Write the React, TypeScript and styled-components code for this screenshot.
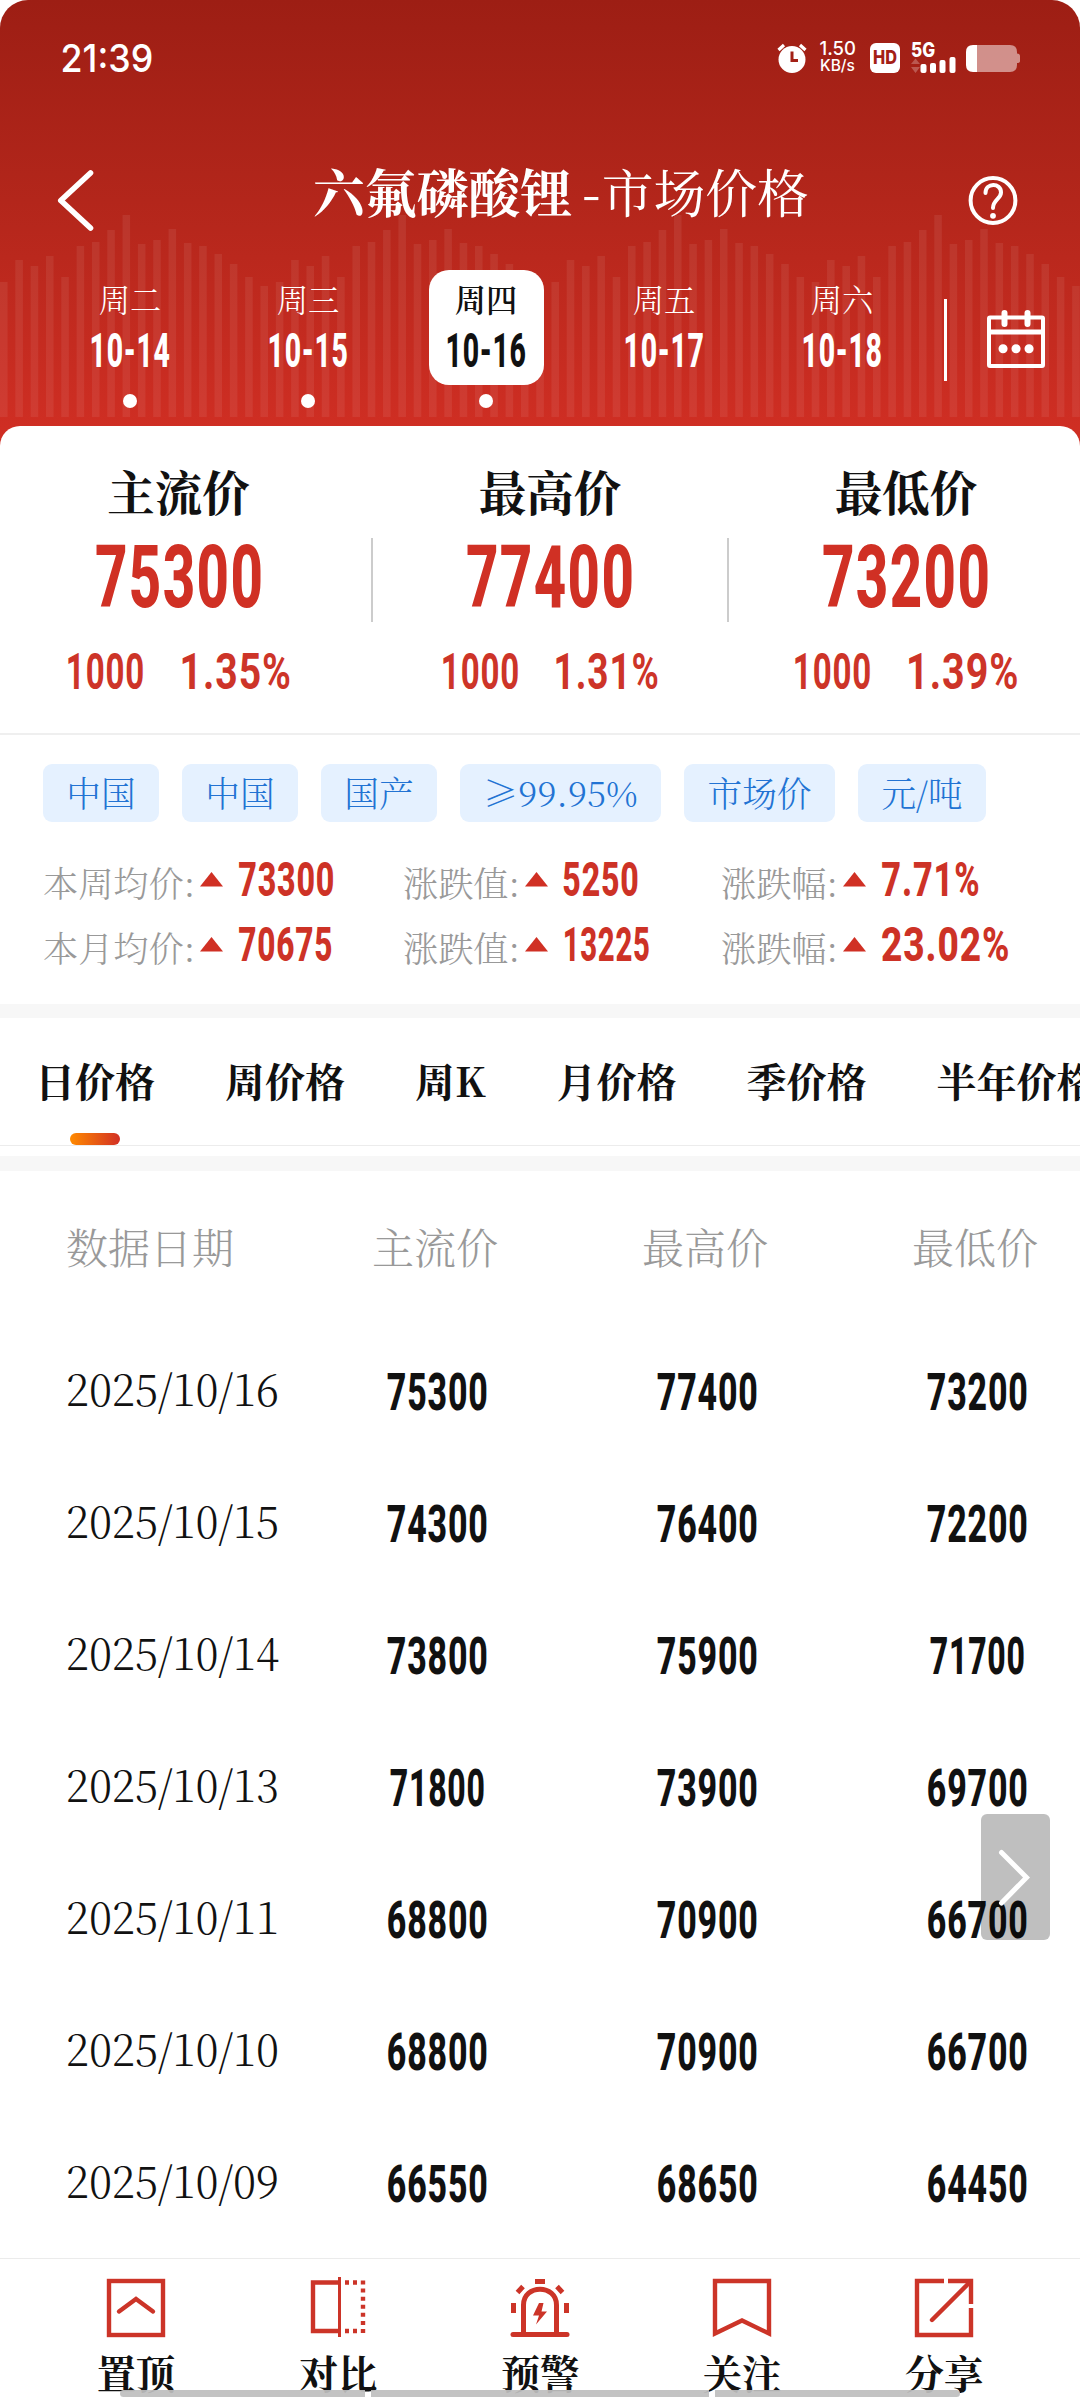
import React, { useLayoutEffect, useRef, useState } from 'react';
import styled, { createGlobalStyle, css } from 'styled-components';

const RED = '#d03024';
const INK = '#111';
const SERIF = `"Noto Serif CJK SC", "Noto Serif SC", "Noto Sans CJK SC", serif`;
const DATE = `"Noto Serif CJK SC", "Liberation Serif", serif`;
const DIGITS = `Roboto, "Liberation Sans", sans-serif`;

const Global = createGlobalStyle`
  * { box-sizing: border-box; }
  body { margin: 0; background: #fff; }
`;

/* ---------- text squeezed horizontally to a known width ---------- */
const FitBox = styled.span<{ $w: number }>`
  display: inline-flex;
  justify-content: center;
  flex: none;
  width: ${(p) => p.$w}px;
`;
const FitInner = styled.span<{ $track: number }>`
  flex: none;
  white-space: nowrap;
  letter-spacing: ${(p) => p.$track}em;
  padding-left: ${(p) => p.$track}em;
`;
function Fit({ w, track = 0, children }: { w: number; track?: number; children: React.ReactNode }) {
  const ref = useRef<HTMLSpanElement>(null);
  const [k, setK] = useState(1);
  useLayoutEffect(() => {
    if (ref.current) setK(w / ref.current.offsetWidth);
  }, [w]);
  return (
    <FitBox $w={w}>
      <FitInner ref={ref} $track={track} style={{ transform: `scaleX(${k})` }}>{children}</FitInner>
    </FitBox>
  );
}
const Num = ({ w, children }: { w: number; children: React.ReactNode }) => (
  <Fit w={w + 2} track={0.025}>{children}</Fit>
);

/* ---------- page ---------- */
const Page = styled.div`
  width: 1080px;
  height: 2400px;
  display: flex;
  flex-direction: column;
  overflow: hidden;
  position: relative;
  background: #fff;
  color: ${INK};
  font-family: ${SERIF};
`;
const Header = styled.header`
  position: relative;
  flex: none;
  height: 446px;
  color: #fff;
  border-radius: 28px 28px 0 0;
  overflow: hidden;
  background: linear-gradient(#9d1e14, #b3261b 45%, #cf2e23 96%);
`;
const Wave = styled.svg`
  position: absolute;
  left: 0;
  top: 0;
`;
const Status = styled.div`
  position: relative;
  display: flex;
  align-items: center;
  height: 115px;
  padding: 0 60px 0 60px;
  font-family: Inter, sans-serif;
`;
const Clock = styled.div`
  font-size: 38.5px;
  font-weight: 500;
  line-height: 46px;
  flex: 1;
`;
const Speed = styled.div`
  display: flex;
  flex-direction: column;
  width: 36px;
  margin: 0 14px 0 13px;
  font-weight: 500;
`;
const SpeedLine = styled.span<{ $s: number; $h: number }>`
  display: block;
  font-size: ${(p) => p.$s}px;
  line-height: ${(p) => p.$h}px;
`;
const HdBadge = styled.div`
  width: 30px;
  height: 30px;
  border-radius: 6px;
  background: #fff;
  color: #a32016;
  font: 800 19px/30px Inter, sans-serif;
  text-align: center;
`;
const Signal = styled.div`
  width: 46px;
  height: 30px;
  margin: 0 9px 0 11px;
  display: flex;
  flex-direction: column;
`;
const SignalText = styled.span`
  font: 800 20px/15px Inter, sans-serif;
  height: 14px;
`;
const SignalSvg = styled.svg`
  display: block;
  flex: none;
`;

const Nav = styled.div`
  position: relative;
  height: 155px;
  display: flex;
  align-items: center;
  padding: 0 61px 0 56px;
`;
const NavIcon = styled.svg`
  flex: none;
  margin-top: 16px;
`;
const Title = styled.h1`
  margin: 0 0 3px 59px;
  flex: 1;
  text-align: center;
  font-size: 51.8px;
  line-height: 60px;
  font-weight: 700;
  white-space: nowrap;
`;
const TitleSub = styled.span`
  font-weight: 400;
  margin-left: 10px;
`;
const TitleDash = styled.span`
  font-weight: 600;
  margin-right: 1px;
`;

const DayStrip = styled.div`
  position: relative;
  display: flex;
  padding-left: 41px;
`;
const Day = styled.div`
  width: 178px;
  display: flex;
  flex-direction: column;
  align-items: center;
`;
const DayCard = styled.div<{ $on?: boolean }>`
  width: 115px;
  height: 115px;
  border-radius: 20px;
  padding-top: 11px;
  display: flex;
  flex-direction: column;
  align-items: center;
  ${(p) => p.$on && css`background: #fff; color: ${INK};`}
`;
const DayName = styled.span<{ $on?: boolean }>`
  font-size: 31.3px;
  line-height: 36px;
  font-weight: ${(p) => (p.$on ? 600 : 300)};
`;
const DayDate = styled.span`
  margin-top: 9px;
  font: 800 48.5px/50px ${DIGITS};
`;
const Dot = styled.span`
  width: 14px;
  height: 14px;
  margin-top: 9px;
  border-radius: 50%;
  background: #fff;
`;
const StripRule = styled.span`
  width: 3px;
  height: 82px;
  margin: 29px 40px 0 13px;
  background: #fff;
`;
const Calendar = styled.svg`
  margin-top: 40px;
`;

/* ---------- summary ---------- */
const Sheet = styled.main`
  position: relative;
  flex: 1;
  min-height: 0;
  overflow: hidden;
  margin-top: -20px;
  border-radius: 20px 20px 0 0;
  background: #fff;
`;
const Summary = styled.section`
  display: flex;
  height: 309px;
  border-bottom: 2px solid #efefef;
`;
const Price = styled.div<{ $w: number }>`
  flex: none;
  width: ${(p) => p.$w}px;
  display: flex;
  flex-direction: column;
  align-items: center;
  padding-top: 35px;
`;
const PriceName = styled.span`
  font-size: 47.5px;
  line-height: 60px;
  height: 60px;
  font-weight: 700;
`;
const PriceValue = styled.span`
  margin-top: 11px;
  color: ${RED};
  font: 800 87px/90px ${DIGITS};
`;
const PriceDelta = styled.span`
  display: flex;
  gap: 33px;
  margin-top: 25px;
  color: #cd3428;
  font: 700 50.5px/50px ${DIGITS};
`;
const Rule = styled.span<{ $ml?: number }>`
  flex: none;
  width: 2px;
  height: 84px;
  margin: 112px 0 0 ${(p) => p.$ml ?? 0}px;
  background: #ccc;
`;

const Tags = styled.div`
  display: flex;
  gap: 23px;
  padding: 29px 0 0 43px;
`;
const Tag = styled.span<{ $w: number }>`
  width: ${(p) => p.$w}px;
  height: 58px;
  border-radius: 9px;
  background: #e5f1ff;
  color: #2273d3;
  font-size: 34.7px;
  line-height: 56px;
  font-weight: 300;
  text-align: center;
  white-space: nowrap;
`;
const Stats = styled.div`
  display: grid;
  grid-template-columns: 360px 318px 1fr;
  grid-auto-rows: 65px;
  padding: 25px 0 27px 43px;
`;
const Stat = styled.div`
  display: flex;
  align-items: center;
  color: #999;
  font-size: 35.2px;
  font-weight: 300;
`;
const StatLabel = styled.span<{ $w: number }>`
  width: ${(p) => p.$w}px;
  padding-top: 4px;
  white-space: nowrap;
`;
const Up = styled.svg`
  margin-right: 14px;
`;
const StatValue = styled.span`
  color: #cd3226;
  font: 800 49px/60px ${DIGITS};
  padding-top: 1px;
`;

const Band = styled.div<{ $h: number }>`
  height: ${(p) => p.$h}px;
  background: #f7f7f7;
`;
const Tabs = styled.nav`
  display: flex;
  gap: 70px;
  height: 128px;
  padding-left: 35px;
  border-bottom: 1px solid #ececec;
  margin-bottom: 10px;
`;
const Tab = styled.span<{ $w: number }>`
  flex: none;
  width: ${(p) => p.$w}px;
  padding-top: 33px;
  font-size: 40px;
  line-height: 58px;
  font-weight: 700;
  white-space: nowrap;
`;
const TabMark = styled.span`
  display: block;
  width: 50px;
  height: 12px;
  margin: 24px auto 0;
  border-radius: 6px;
  background: linear-gradient(90deg, #ff8a00, #d23024);
`;

/* ---------- table ---------- */
const Row = styled.div`
  display: grid;
  grid-template-columns: 302px 270px 270px 270px;
  align-items: center;
  height: 132px;
`;
const HeadRow = styled(Row)`
  height: 154px;
  color: #999;
  font-size: 42px;
  font-weight: 300;
  line-height: 60px;
  padding-bottom: 4px;
`;
const DateCell = styled.div`
  padding-left: 66px;
`;
const DayText = styled(DateCell)`
  font: 300 44.5px/60px ${DATE};
  padding-bottom: 9px;
`;
const HeadCell = styled.div`
  text-align: center;
  padding-right: 4px;
`;
const NumCell = styled.div`
  text-align: center;
  font: 800 51px/60px ${DIGITS};
  padding-top: 3px;
`;
const SideButton = styled.button`
  position: absolute;
  left: 981px;
  top: 1814px;
  width: 69px;
  height: 126px;
  border: 0;
  padding: 0;
  border-radius: 6px;
  background: rgba(0, 0, 0, 0.25);
`;

/* ---------- footer ---------- */
const Footer = styled.footer`
  flex: none;
  position: relative;
  height: 142px;
  display: flex;
  padding: 0 35px;
  border-top: 1px solid #ebebeb;
  background: #fff;
`;
const Action = styled.div`
  width: 202px;
  display: flex;
  flex-direction: column;
  align-items: center;
  padding-top: 18px;
  font-size: 39.3px;
  line-height: 50px;
  font-weight: 700;
`;
const ActionIcon = styled.svg`
  flex: none;
  fill: none;
  stroke: #cc3428;
  stroke-width: 4.4;
  margin-bottom: 8px;
`;
const HomeBar = styled.div`
  position: absolute;
  left: 120px;
  bottom: 3px;
  width: 840px;
  height: 7px;
  display: flex;
  gap: 6px;
  border-radius: 4px;
  overflow: hidden;
`;
const HomePart = styled.span<{ $w: number }>`
  width: ${(p) => p.$w}px;
  background: rgba(190, 190, 190, 0.93);
`;

const waveTops = [282, 260, 266, 256, 277, 246, 242, 230, 215, 244, 240, 229, 243, 246, 254, 264, 277, 286];
const waves = [
  { x: 0, n: 18 },
  { x: 275.8, n: 18 },
  { x: 551.4, n: 17 },
  { x: 811.7, n: 18 },
];

const days = [
  { name: '周二', date: '10-14', dot: true },
  { name: '周三', date: '10-15', dot: true },
  { name: '周四', date: '10-16', dot: true, on: true },
  { name: '周五', date: '10-17' },
  { name: '周六', date: '10-18' },
];
const tags: [string, number][] = [['中国', 116], ['中国', 116], ['国产', 116], ['≥99.95%', 201], ['市场价', 151], ['元/吨', 128]];
const stats: [string, string, number][] = [
  ['本周均价:', '73300', 96],
  ['涨跌值:', '5250', 76],
  ['涨跌幅:', '7.71%', 98],
  ['本月均价:', '70675', 94],
  ['涨跌值:', '13225', 87],
  ['涨跌幅:', '23.02%', 128],
];
const tabs: [string, number][] = [['日价格', 120], ['周价格', 120], ['周K', 71.5], ['月价格', 120], ['季价格', 120], ['半年价格', 160]];
const rows = [
  ['2025/10/16', '75300', '77400', '73200'],
  ['2025/10/15', '74300', '76400', '72200'],
  ['2025/10/14', '73800', '75900', '71700'],
  ['2025/10/13', '71800', '73900', '69700'],
  ['2025/10/11', '68800', '70900', '66700'],
  ['2025/10/10', '68800', '70900', '66700'],
  ['2025/10/09', '66550', '68650', '64450'],
];
const numWidth = (s: string) => (s.includes('1') ? 95 : 101);

function PriceColumn({ name, value, delta, pct, w, pw }: { name: string; value: string; delta: string; pct: string; w: number; pw: number }) {
  return (
    <Price $w={w}>
      <PriceName>{name}</PriceName>
      <PriceValue><Num w={169}>{value}</Num></PriceValue>
      <PriceDelta><Num w={78}>{delta}</Num><Num w={pw}>{pct}</Num></PriceDelta>
    </Price>
  );
}

export default function App() {
  return (
    <Page>
      <Global />
      <Header>
        <Wave width="1080" height="446" fill="#fff" fillOpacity="0.07">
          {waves.map((w) =>
            waveTops.slice(0, w.n).map((t, i) => (
              <rect key={`${w.x}-${i}`} x={w.x + i * 15.32} y={t} width="7.6" height={417 - t} />
            )),
          )}
        </Wave>
        <Status>
          <Clock><Fit w={93}>21:39</Fit></Clock>
          <svg width="30" height="30" viewBox="0 0 30 30">
            <circle cx="15" cy="16.5" r="13.5" fill="#fff" />
            <path d="M1.5 7 L7 2 M23 2 L28.5 7" stroke="#fff" strokeWidth="3.2" />
            <path d="M15 8.5 V17.6 H21" stroke="#a32016" strokeWidth="3" fill="none" />
          </svg>
          <Speed>
            <SpeedLine $s={19} $h={16}><Fit w={36}>1.50</Fit></SpeedLine>
            <SpeedLine $s={15.5} $h={17}><Fit w={35}>KB/s</Fit></SpeedLine>
          </Speed>
          <HdBadge><Fit w={24}>HD</Fit></HdBadge>
          <Signal>
            <SignalText><Fit w={24}>5G</Fit></SignalText>
            <SignalSvg width="46" height="16" fill="#fff">
              <path d="M0 7 L4.5 1.5 L9 7 Z M0 10 H9 L4.5 16 Z" fillOpacity="0.25" />
              <rect x="9.5" y="7" width="6" height="9" rx="2" />
              <rect x="19" y="6" width="6" height="10" rx="2" />
              <rect x="28.5" y="3" width="6" height="13" rx="2" />
              <rect x="38.5" y="0" width="6" height="16" rx="2" />
            </SignalSvg>
          </Signal>
          <svg width="54" height="28" viewBox="0 0 54 28">
            <path d="M11 1 H44 Q51 1 51 8 V9.5 Q54 9.5 54 12 V17 Q54 19 51 19 V21 Q51 28 44 28 H11 Z" fill="#fff" fillOpacity="0.5" />
            <path d="M11 1 V28 H7 Q0 28 0 21 V8 Q0 1 7 1 Z" fill="#fff" />
          </svg>
        </Status>
        <Nav>
          <NavIcon width="40" height="64" fill="none" stroke="#fff" strokeWidth="5.6" strokeLinecap="round" strokeLinejoin="round">
            <path d="M34.5 4 L4.8 31.5 L34.5 59" />
          </NavIcon>
          <Title>六氟磷酸锂<TitleSub><TitleDash>-</TitleDash>市场价格</TitleSub></Title>
          <NavIcon width="52" height="52" fill="none" stroke="#fff" strokeWidth="4" strokeLinecap="round">
            <circle cx="26" cy="25.5" r="22.4" />
            <path d="M18.5 18 C18.5 7.5 34 7.5 34 17.5 C34 24 26 24.5 26 33" />
            <circle cx="26" cy="40.8" r="2.9" fill="#fff" stroke="none" />
          </NavIcon>
        </Nav>
        <DayStrip>
          {days.map((d) => (
            <Day key={d.date}>
              <DayCard $on={d.on}>
                <DayName $on={d.on}>{d.name}</DayName>
                <DayDate><Num w={80}>{d.date}</Num></DayDate>
              </DayCard>
              {d.dot && <Dot />}
            </Day>
          ))}
          <StripRule />
          <Calendar width="58" height="59" fill="none" stroke="#fff" strokeWidth="4">
            <rect x="2" y="7.5" width="54" height="48.5" rx="1" />
            <path d="M2 22 H56" strokeWidth="5" />
            <path d="M17.5 3 V14 M40.5 3 V14" strokeWidth="6" strokeLinecap="round" />
            <path d="M16 38.8 h0.1 M29 38.8 h0.1 M42 38.8 h0.1" strokeWidth="9" strokeLinecap="round" />
          </Calendar>
        </DayStrip>
      </Header>

      <Sheet>
        <Summary>
          <PriceColumn name="主流价" value="75300" delta="1000" pct="1.35%" w={357} pw={111} />
          <Rule $ml={14} />
          <PriceColumn name="最高价" value="77400" delta="1000" pct="1.31%" w={354} pw={105} />
          <Rule />
          <PriceColumn name="最低价" value="73200" delta="1000" pct="1.39%" w={354} pw={112} />
        </Summary>
        <Tags>
          {tags.map(([t, w], i) => <Tag key={i} $w={w}>{t}</Tag>)}
        </Tags>
        <Stats>
          {stats.map(([label, value, w], i) => (
            <Stat key={i}>
              <StatLabel $w={i % 3 === 0 ? 157 : 122}>{label}</StatLabel>
              <Up width="23" height="15"><path d="M0 14.5 L11.5 0 L23 14.5 Z" fill={RED} /></Up>
              <StatValue><Num w={w}>{value}</Num></StatValue>
            </Stat>
          ))}
        </Stats>
        <Band $h={14} />
        <Tabs>
          {tabs.map(([t, w], i) => (
            <Tab key={t} $w={w}>{t}{i === 0 && <TabMark />}</Tab>
          ))}
        </Tabs>
        <Band $h={15} />
        <HeadRow>
          <DateCell>数据日期</DateCell>
          <HeadCell>主流价</HeadCell>
          <HeadCell>最高价</HeadCell>
          <HeadCell>最低价</HeadCell>
        </HeadRow>
        {rows.map((r) => (
          <Row key={r[0]}>
            <DayText><Fit w={213}>{r[0]}</Fit></DayText>
            {r.slice(1).map((v, i) => (
              <NumCell key={i}><Num w={numWidth(v)}>{v}</Num></NumCell>
            ))}
          </Row>
        ))}
      </Sheet>

      <Footer>
        <Action>
          <ActionIcon width="62" height="62" viewBox="-2 -2 62 62">
            <rect x="2" y="2" width="54" height="54" />
            <path d="M12 32.5 L29 20 L46 32.5" strokeLinecap="round" />
          </ActionIcon>
          置顶
        </Action>
        <Action>
          <ActionIcon width="62" height="62" viewBox="-2 -2 62 62">
            <path d="M30 3.5 H4 V52 H30" />
            <path d="M30.5 -2 V58" strokeWidth="3" />
            <path d="M36 3.5 h4 M44 3.5 h4 M36 52 h4 M44 52 h4" />
            <path d="M54 1.5 V54" strokeDasharray="4 4.08" />
          </ActionIcon>
          对比
        </Action>
        <Action>
          <ActionIcon width="62" height="62" viewBox="-2 -2 62 62">
            <path d="M12.5 54 V26 C12.5 5 45.5 5 45.5 26 V54" strokeWidth="5" />
            <path d="M2 55.5 H56" strokeWidth="5" strokeLinecap="round" />
            <path d="M24 2.5 H34 M2.5 24 V34 M55.5 24 V34" strokeWidth="5" />
            <path d="M6.5 13.5 L12 7.5 M51.5 13.5 L46 7.5" strokeWidth="5" />
            <path d="M28 24 L22 36.5 H28 L25 45.5 L36 32.5 H30.5 L32.5 24 Z" fill="#cc3428" stroke="none" />
          </ActionIcon>
          预警
        </Action>
        <Action>
          <ActionIcon width="62" height="62" viewBox="-2 -2 62 62">
            <path d="M2 2 H56 V54.5 L29 41.5 L2 54.5 Z" />
          </ActionIcon>
          关注
        </Action>
        <Action>
          <ActionIcon width="62" height="62" viewBox="-2 -2 62 62">
            <path d="M29 2 H2 V56 H56 V29" />
            <path d="M33 2 H56 V25" />
            <path d="M17 41 L55 3" strokeLinecap="round" />
          </ActionIcon>
          分享
        </Action>
        <HomeBar><HomePart $w={245} /><HomePart $w={338} /><HomePart $w={245} /></HomeBar>
      </Footer>

      <SideButton aria-label="next">
        <svg width="69" height="126" fill="none" stroke="#fff" strokeWidth="5" strokeLinecap="round">
          <path d="M20.5 38.5 L45.5 63.5 L20.5 89" />
        </svg>
      </SideButton>
    </Page>
  );
}
